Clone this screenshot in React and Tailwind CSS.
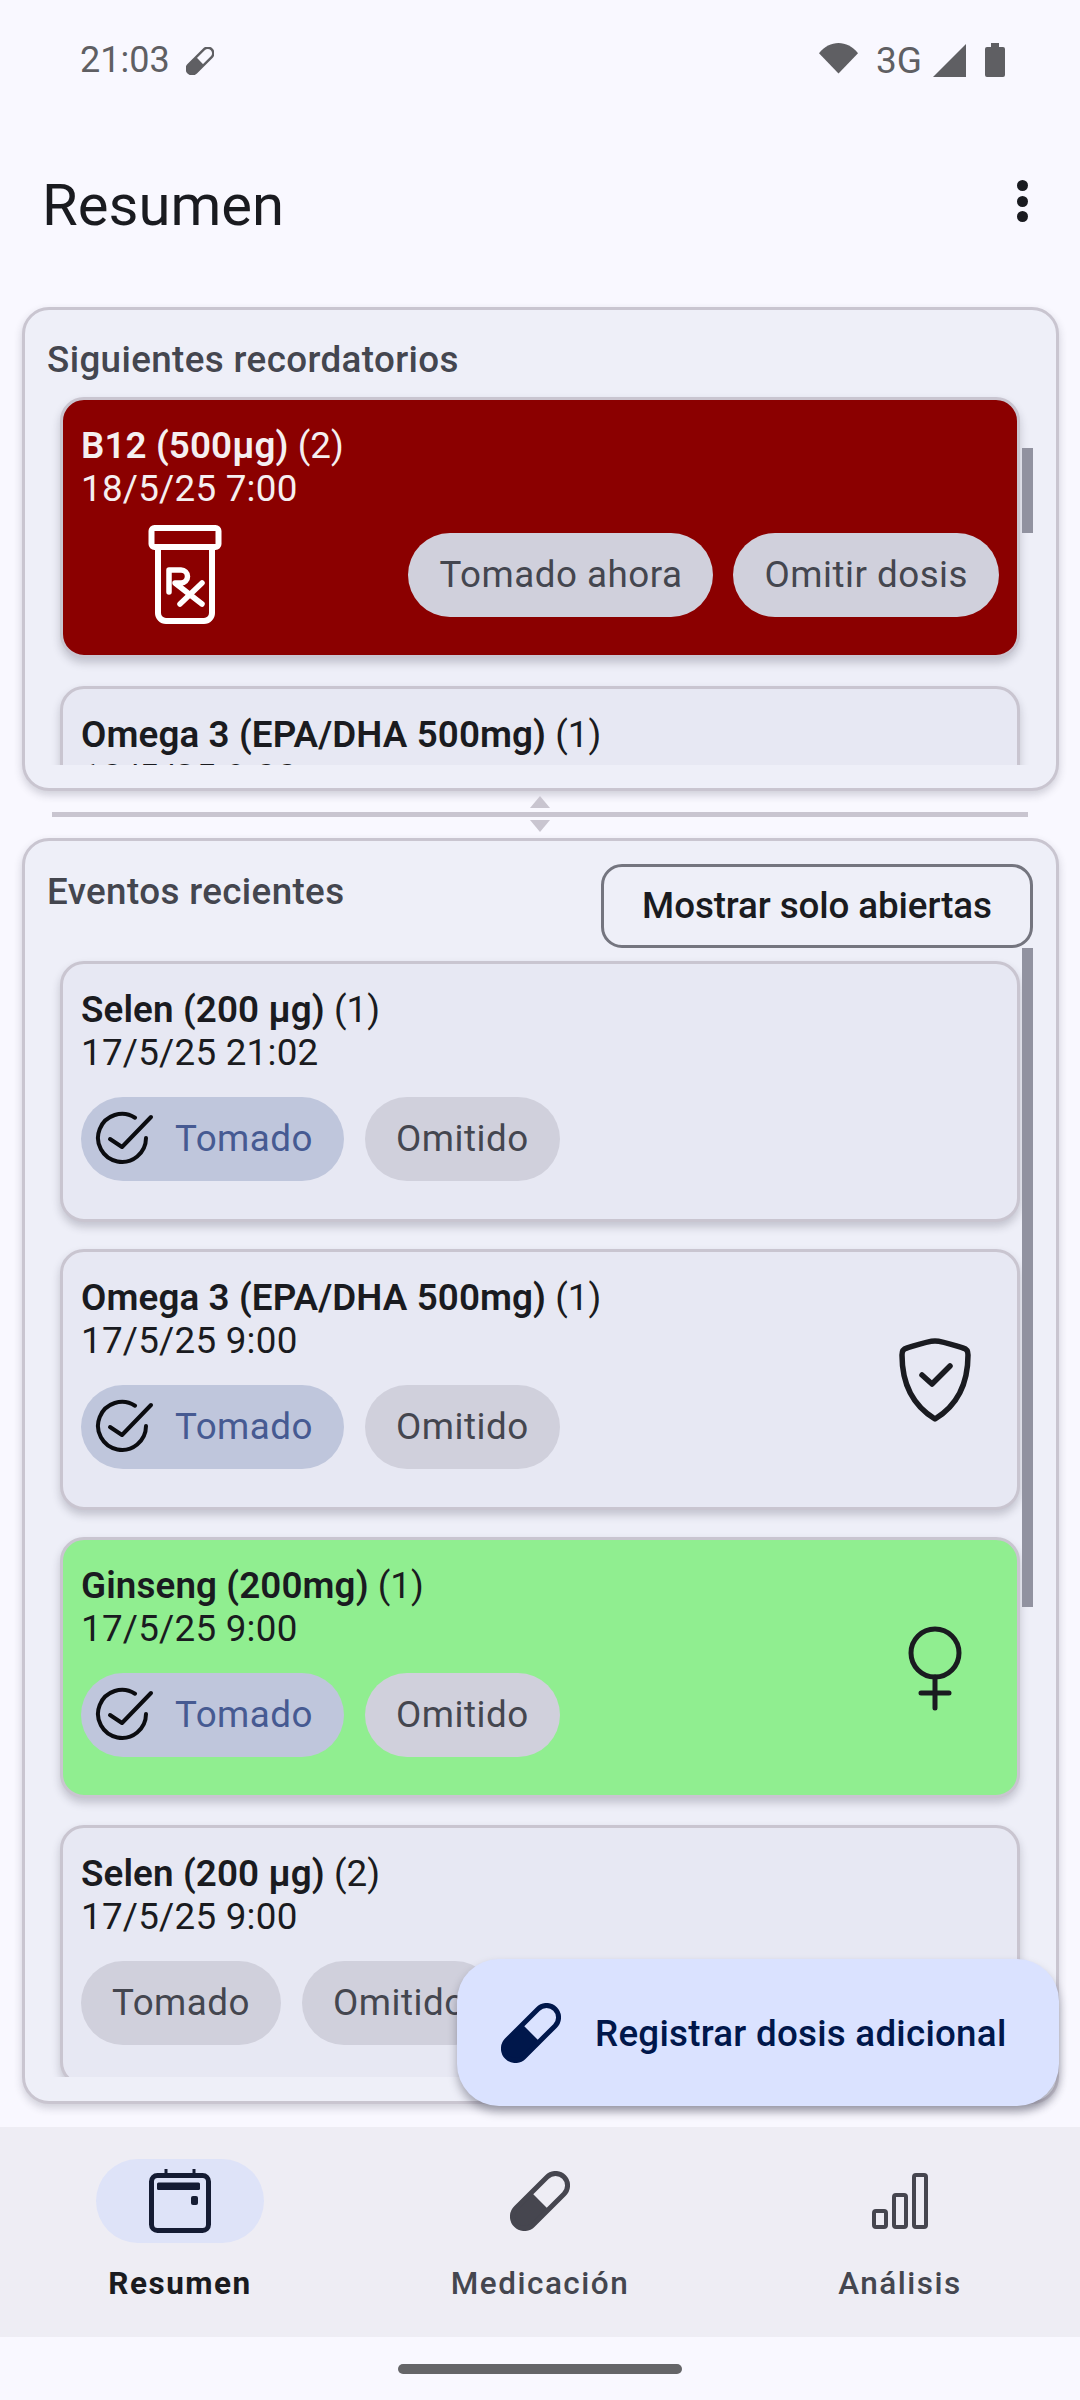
function PillIcon({ color, className }) {
  return (
    <svg viewBox="0 0 60 60" className={className}>
      <g transform="rotate(45 30 30)">
        <path d="M18 30 H42 V52 a12 12 0 0 1 -24 0 Z" fill={color} />
        <rect x="18" y="-4" width="24" height="68" rx="12" fill="none" stroke={color} strokeWidth="5" />
      </g>
    </svg>
  );
}

function CheckIcon() {
  return (
    <svg viewBox="0 0 60 60" className="w-[60px] h-[60px] shrink-0" fill="none" stroke="#0b0c10" strokeWidth="4" strokeLinecap="round" strokeLinejoin="round">
      <path d="M51 29 A24 24 0 1 1 40 8.7" />
      <path d="M15 30 L27 38 L56 8" />
    </svg>
  );
}

function Chip({ children, selected, check }) {
  return (
    <div
      className={`h-[84px] rounded-full flex items-center shrink-0 text-[36.75px] leading-[42px] tracking-[0.5px] ${
        selected ? "bg-[#bfc6dc] text-[#465a92]" : "bg-[#d0d0dc] text-[#44464f]"
      } ${check ? "pl-[14px] pr-[31px] gap-[20px]" : "px-[31px]"}`}
    >
      {check && <CheckIcon />}
      <span>{children}</span>
    </div>
  );
}

function CardText({ name, n, date }) {
  return (
    <div>
      <div className="text-[36.75px] leading-[42.5px] whitespace-nowrap">
        <span className="font-semibold tracking-[0.12px]">{name}</span> ({n})
      </div>
      <div className="text-[36.75px] leading-[42.5px] whitespace-nowrap tracking-[0.25px]">{date}</div>
    </div>
  );
}

function EventCard({ bg = "bg-[#e7e8f3]", name, n, date, selected = true, icon }) {
  return (
    <div className={`h-[261px] shrink-0 rounded-[24px] border-[3px] border-[#c9c5d0] ${bg} shadow-[0_5px_9px_rgba(40,40,60,0.22)] pl-[18px] pr-[46px] pt-[25px] flex items-center justify-between text-[#1a1b20]`}>
      <div className="self-start">
        <CardText name={name} n={n} date={date} />
        <div className="flex gap-[21px] mt-[23px]">
          <Chip selected={selected} check={selected}>Tomado</Chip>
          <Chip>Omitido</Chip>
        </div>
      </div>
      {icon && <div className="-mt-[25px] w-[72px] flex justify-center">{icon}</div>}
    </div>
  );
}

function ShieldIcon() {
  return (
    <svg viewBox="0 0 72 84" className="w-[72px] h-[84px]" fill="none" stroke="#1a1b20" strokeWidth="5.5" strokeLinecap="round" strokeLinejoin="round">
      <path d="M36 3 C28 3 12 9 8 10 C4 11 3 13 3 17 C3 50 18 70 36 81 C54 70 69 50 69 17 C69 13 68 11 64 10 C60 9 44 3 36 3 Z" />
      <path d="M23 37 L33 46 L51 28" />
    </svg>
  );
}

function VenusIcon() {
  return (
    <svg viewBox="0 0 56 86" className="w-[56px] h-[86px]" fill="none" stroke="#1a1b20" strokeWidth="5" strokeLinecap="round">
      <circle cx="28" cy="28" r="24" />
      <path d="M28 52 V83 M14 68 H42" />
    </svg>
  );
}

function BottleIcon() {
  return (
    <svg viewBox="0 0 76 100" className="w-[76px] h-[100px] shrink-0 ml-[66px]" fill="none" stroke="#ffffff" strokeWidth="6" strokeLinecap="round" strokeLinejoin="round">
      <rect x="4.5" y="3" width="67" height="19" rx="3" />
      <path d="M11 24 V88 a8 8 0 0 0 8 8 H57 a8 8 0 0 0 8 -8 V24" />
      <path d="M22 67 V45 H34 a6.5 6.5 0 0 1 0 13 H28 L55 79" strokeWidth="5.5" />
      <path d="M55 58 L33 79" strokeWidth="5.5" />
    </svg>
  );
}

function ScrollThumb({ className }) {
  return <div className={`absolute right-0 w-[11px] bg-[#9192a0] ${className}`} />;
}

export default function App() {
  return (
    <div className="relative w-[1080px] h-[2400px] bg-[#f9f8ff] flex flex-col overflow-hidden font-[family-name:Roboto,sans-serif]">
      {/* status bar */}
      <div className="h-[120px] shrink-0 flex items-center justify-between pl-[80px] pr-[75px] text-[#5f5f63] text-[36px]">
        <div className="flex items-center gap-[16px]">
          <span>21:03</span>
          <svg viewBox="0 0 28 28" className="w-[28px] h-[28px] mt-[2px]">
            <g transform="rotate(45 14 14)">
              <rect x="8.5" y="-2.5" width="11" height="33" rx="5.5" fill="none" stroke="#5f5f63" strokeWidth="2.4" />
              <path d="M8.5 14 H19.5 V25 a5.5 5.5 0 0 1 -11 0 Z" fill="#5f5f63" />
            </g>
          </svg>
        </div>
        <div className="flex items-center">
          <svg viewBox="0 0 40 32" className="w-[39px] h-[32px] mt-[-4px]">
            <path d="M0 11 C11 -3 29 -3 40 11 L20 32 Z" fill="#5f5f63" />
          </svg>
          <span className="ml-[18px] text-[37px] leading-none">3G</span>
          <svg viewBox="0 0 33 33" className="w-[33px] h-[33px] ml-[11px]">
            <path d="M33 0 V33 H0 Z" fill="#5f5f63" />
          </svg>
          <svg viewBox="0 0 20 34" className="w-[20px] h-[34px] ml-[19px]">
            <path d="M6 0 H14 V4 H18 a2 2 0 0 1 2 2 V32 a2 2 0 0 1 -2 2 H2 a2 2 0 0 1 -2 -2 V6 a2 2 0 0 1 2 -2 H6 Z" fill="#5f5f63" />
          </svg>
        </div>
      </div>

      {/* toolbar */}
      <div className="h-[170px] shrink-0 flex items-center justify-between pl-[42px] pr-[52px] text-[#1a1b20]">
        <h1 className="text-[58px] leading-none font-normal">Resumen</h1>
        <div className="flex flex-col gap-[4.5px] -mt-[8px]">
          <div className="w-[11px] h-[11px] rounded-full bg-[#1a1b20]" />
          <div className="w-[11px] h-[11px] rounded-full bg-[#1a1b20]" />
          <div className="w-[11px] h-[11px] rounded-full bg-[#1a1b20]" />
        </div>
      </div>

      {/* content */}
      <div className="relative flex-1 min-h-0 flex flex-col pt-[17px] pb-[23px] pl-[22px] pr-[21px]">
        {/* panel 1 */}
        <section className="h-[484px] shrink-0 rounded-[27px] border-[3px] border-[#c9c5d0] bg-[#eeeff8] shadow-[0_4px_8px_rgba(40,40,60,0.2)] flex flex-col pt-[29px]">
          <h2 className="ml-[22px] text-[36.75px] leading-[42px] font-medium tracking-[0.38px] text-[#44464f]">Siguientes recordatorios</h2>
          <div className="relative mt-[5px] ml-[22px] mr-[23px] h-[379px] overflow-hidden pl-[13px] pr-[13px] pt-[11px] flex flex-col gap-[28px]">
            <div className="h-[261px] shrink-0 rounded-[24px] border-[3px] border-[#c9c5d0] bg-[#8b0000] shadow-[0_5px_9px_rgba(40,40,60,0.22)] px-[18px] pt-[25px] text-[#f5eff0]">
              <CardText name="B12 (500µg)" n={2} date="18/5/25 7:00" />
              <div className="mt-[23px] h-[84px] flex items-center justify-between">
                <BottleIcon />
                <div className="flex gap-[20px]">
                  <Chip>Tomado ahora</Chip>
                  <Chip>Omitir dosis</Chip>
                </div>
              </div>
            </div>
            <div className="h-[261px] shrink-0 rounded-[24px] border-[3px] border-[#c9c5d0] bg-[#e7e8f3] shadow-[0_5px_9px_rgba(40,40,60,0.22)] px-[18px] pt-[25px] text-[#1a1b20]">
              <CardText name="Omega 3 (EPA/DHA 500mg)" n={1} date="18/5/25 9:00" />
            </div>
            <ScrollThumb className="top-[62px] h-[85px]" />
          </div>
        </section>

        {/* divider */}
        <div className="h-[47px] shrink-0 flex flex-col items-center pt-[5px] pr-[1px]">
          <svg viewBox="0 0 20 12" className="w-[20px] h-[12px]"><path d="M10 0 L20 12 H0 Z" fill="#c9c5d0" /></svg>
          <div className="w-[976px] h-[5px] bg-[#c9c5d0] mt-[4px] mb-[3px]" />
          <svg viewBox="0 0 20 12" className="w-[20px] h-[12px]"><path d="M0 0 H20 L10 12 Z" fill="#c9c5d0" /></svg>
        </div>

        {/* panel 2 */}
        <section className="flex-1 min-h-0 rounded-[27px] border-[3px] border-[#c9c5d0] bg-[#eeeff8] shadow-[0_4px_8px_rgba(40,40,60,0.2)] flex flex-col pt-[23px]">
          <div className="flex justify-between items-start pl-[22px] pr-[23px]">
            <h2 className="mt-[7px] text-[36.75px] leading-[42px] font-medium tracking-[0.38px] text-[#44464f]">Eventos recientes</h2>
            <button className="w-[432px] h-[84px] rounded-[21px] border-[3px] border-[#74757f] text-[36.75px] leading-[42px] font-medium tracking-[-0.1px] text-[#1a1b20]">
              Mostrar solo abiertas
            </button>
          </div>
          <div className="relative ml-[22px] mr-[23px] flex-1 min-h-0 mb-[24px] overflow-hidden pl-[13px] pr-[13px] pt-[13px] flex flex-col gap-[27px]">
            <EventCard name="Selen (200 µg)" n={1} date="17/5/25 21:02" />
            <EventCard name="Omega 3 (EPA/DHA 500mg)" n={1} date="17/5/25 9:00" icon={<ShieldIcon />} />
            <EventCard bg="bg-[#90ee90]" name="Ginseng (200mg)" n={1} date="17/5/25 9:00" icon={<VenusIcon />} />
            <EventCard name="Selen (200 µg)" n={2} date="17/5/25 9:00" selected={false} />
            <ScrollThumb className="top-0 h-[659px]" />
          </div>
        </section>

        {/* floating action button */}
        <button className="absolute left-[457px] top-[1669px] w-[602px] h-[147px] rounded-[42px] bg-[#dae2ff] shadow-[0_6px_10px_rgba(30,30,50,0.35)] flex items-center pl-[44px] gap-[34px] text-[#00174b] text-[36.75px] font-medium tracking-[0.25px]">
          <PillIcon color="#00174b" className="w-[60px] h-[60px] shrink-0" />
          <span className="mt-[2px]">Registrar dosis adicional</span>
        </button>
      </div>

      {/* navigation */}
      <nav className="relative z-10 h-[210px] shrink-0 bg-[#eeedf4] grid grid-cols-3 pt-[32px]">
        <div className="flex flex-col items-center">
          <div className="w-[168px] h-[84px] rounded-full bg-[#dee3f8] flex items-center justify-center">
            <svg viewBox="0 0 64 64" className="w-[64px] h-[64px]" fill="none" stroke="#151c33" strokeWidth="5" strokeLinejoin="round">
              <rect x="3.5" y="6.5" width="57" height="55" rx="6" />
              <path d="M18 0 V6 M46 0 V6" strokeWidth="3" />
              <rect x="9" y="13.5" width="43" height="7.5" rx="1.5" fill="#151c33" stroke="none" />
              <rect x="43" y="27" width="7" height="9" rx="2" fill="#151c33" stroke="none" />
            </svg>
          </div>
          <span className="mt-[21px] text-[31.5px] leading-[40px] font-bold tracking-[1.5px] text-[#1a1b20]">Resumen</span>
        </div>
        <div className="flex flex-col items-center">
          <div className="w-[168px] h-[84px] flex items-center justify-center">
            <PillIcon color="#46464f" className="w-[60px] h-[60px]" />
          </div>
          <span className="mt-[21px] text-[31.5px] leading-[40px] font-medium tracking-[1.5px] text-[#44464f]">Medicación</span>
        </div>
        <div className="flex flex-col items-center">
          <div className="w-[168px] h-[84px] flex items-center justify-center">
            <svg viewBox="0 0 56 56" className="w-[56px] h-[56px]" fill="none" stroke="#46464f" strokeWidth="4" strokeLinejoin="round">
              <rect x="2" y="38" width="12" height="16" rx="2" />
              <rect x="22" y="22" width="12" height="32" rx="2" />
              <rect x="42" y="2" width="12" height="52" rx="2" />
            </svg>
          </div>
          <span className="mt-[21px] text-[31.5px] leading-[40px] font-medium tracking-[1.5px] text-[#44464f]">Análisis</span>
        </div>
      </nav>

      {/* gesture bar */}
      <div className="h-[63px] shrink-0 flex justify-center pt-[27px]">
        <div className="w-[284px] h-[10px] rounded-full bg-[#656568]" />
      </div>
    </div>
  );
}
